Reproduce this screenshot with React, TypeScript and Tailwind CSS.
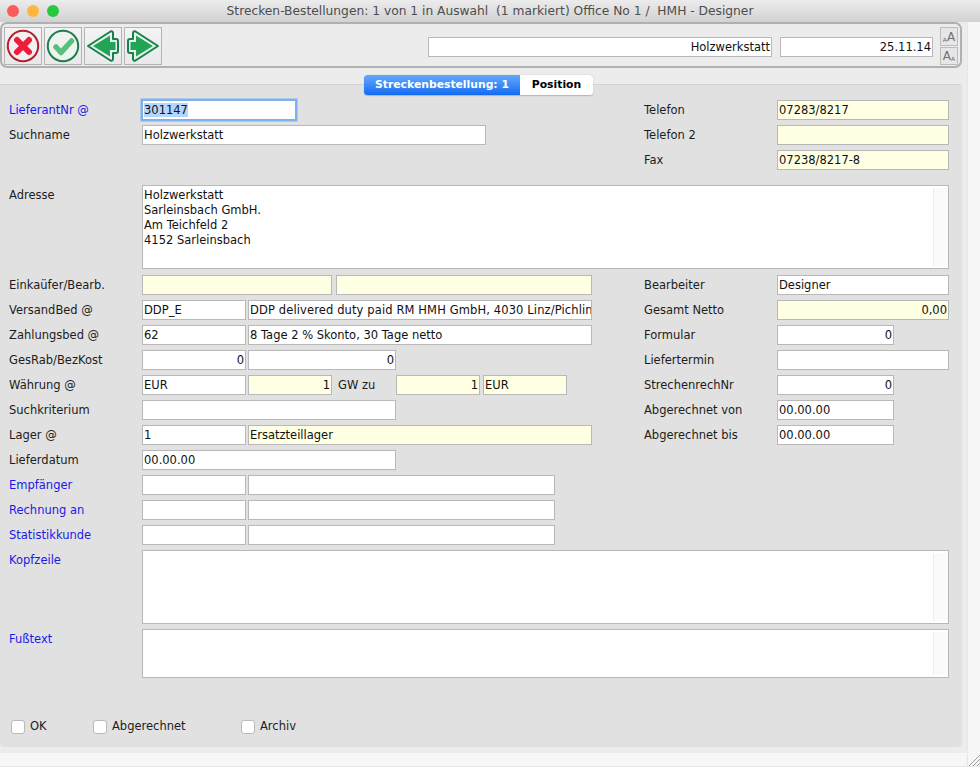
import React from 'react';

const font = { fontFamily: '"DejaVu Sans", sans-serif' };

function Field({ w, text = '', yellow = false, right = false, className = '' }: { w: string; text?: string; yellow?: boolean; right?: boolean; className?: string }) {
  return (
    <div className={`${w} h-5 shrink-0 overflow-hidden whitespace-nowrap border border-[#b8b8b8] px-[1px] pt-[1px] text-[11.5px] leading-[17px] text-[#111] ${yellow ? 'bg-[#ffffe3]' : 'bg-white'} ${right ? 'text-right' : ''} ${className}`}>
      {text}
    </div>
  );
}

function Label({ text, blue = false, w = 'w-[132px] pl-px' }: { text: string; blue?: boolean; w?: string }) {
  return <div className={`${w} shrink-0 pt-[1px] text-[11.5px] leading-[18px] ${blue ? 'text-[#1a1ae6]' : 'text-[#1c1c1c]'}`}>{text}</div>;
}

function Row({ children }: { children: React.ReactNode }) {
  return <div className="flex h-5 items-start">{children}</div>;
}

function Left({ children }: { children?: React.ReactNode }) {
  return <div className="flex w-[636px] shrink-0 items-start gap-[2px]">{children}</div>;
}

function Right({ label, children }: { label: string; children?: React.ReactNode }) {
  return (
    <div className="flex items-start">
      <Label text={label} w="w-[133px]" />
      {children}
    </div>
  );
}

function TextBox({ lines = [], h }: { lines?: string[]; h: string }) {
  return (
    <div className={`${h} flex w-[807px] shrink-0 border border-[#b8b8b8] bg-white`}>
      <div className="flex-1 px-[1px] pt-[2px] text-[11.5px] leading-[15px] text-[#111]">
        {lines.map((l) => (
          <div key={l}>{l}</div>
        ))}
      </div>
      <div className="my-[2px] w-[15px] border-l border-[#ececec] bg-[#fafafa]" />
    </div>
  );
}

function ToolButton({ children }: { children: React.ReactNode }) {
  return <div className="flex h-[38px] w-[38px] items-center justify-center border border-[#b4b4b4] bg-gradient-to-b from-[#f3f3f3] to-[#e9e9e9]">{children}</div>;
}

function Arrow({ flip = false }: { flip?: boolean }) {
  return (
    <svg width="34" height="34" viewBox="0 0 34 34">
      <g transform={flip ? 'translate(34,0) scale(-1,1)' : undefined}>
        <path d="M2 17 L24.5 2.5 Q27 1.5 27 4.5 L27 10 L30 10 Q32 10 32 12 L32 22 Q32 24 30 24 L27 24 L27 29.5 Q27 32.5 24.5 31.5 Z" fill="#e8f3ec" stroke="#17804f" strokeWidth="2" strokeLinejoin="round" />
        <path d="M7 17 L24 6.5 L24 13 L29.5 13 L29.5 21 L24 21 L24 27.5 Z" fill="#22a455" />
      </g>
    </svg>
  );
}

function Check({ label, w }: { label: string; w: string }) {
  return (
    <div className={`${w} flex items-center gap-[5px]`}>
      <div className="h-[14px] w-[14px] rounded-[3px] border border-[#b9b9b9] bg-white" />
      <span className="text-[11.5px] text-[#1c1c1c]">{label}</span>
    </div>
  );
}

export default function App() {
  return (
    <div className="relative h-[767px] w-[980px] overflow-hidden bg-[#ececec]" style={font}>
      {/* title bar */}
      <div className="relative z-10 flex h-[22px] items-center justify-center rounded-t-[5px] bg-gradient-to-b from-[#ececec] to-[#d2d2d2] pt-px">
        <div className="absolute left-[7px] top-[5px] flex gap-2">
          <div className="h-3 w-3 rounded-full bg-[#fc5b57]" />
          <div className="h-3 w-3 rounded-full bg-[#fdb73f]" />
          <div className="h-3 w-3 rounded-full bg-[#26c840]" />
        </div>
        <span className="whitespace-pre text-[12.25px] text-[#4d4d4d]">Strecken-Bestellungen: 1 von 1 in Auswahl  (1 markiert) Office No 1 /  HMH - Designer</span>
      </div>

      <div className="w-[962px] pb-[16px]">
        {/* toolbar */}
        <div className="flex h-[46px] items-center justify-between rounded-[7px] border-2 border-[#b0b0b0] px-[2px] pt-[2px]">
          <div className="flex gap-[2px]">
            <ToolButton>
              <svg width="34" height="34" viewBox="0 0 34 34">
                <circle cx="17" cy="17" r="15.2" fill="#f4eff0" stroke="#b3202f" strokeWidth="2" />
                <path d="M11 11 L23 23 M23 11 L11 23" stroke="#ee1c38" strokeWidth="6" strokeLinecap="round" />
              </svg>
            </ToolButton>
            <ToolButton>
              <svg width="34" height="34" viewBox="0 0 34 34">
                <circle cx="17" cy="17" r="15.2" fill="#eef3ef" stroke="#1f7d4e" strokeWidth="2" />
                <path d="M10 18 L15 23.5 L25.5 12" fill="none" stroke="#5bbf7c" strokeWidth="5.5" strokeLinecap="round" strokeLinejoin="round" />
              </svg>
            </ToolButton>
            <ToolButton>
              <Arrow />
            </ToolButton>
            <ToolButton>
              <Arrow flip />
            </ToolButton>
          </div>
          <div className="flex items-center">
            <Field w="w-[344px]" text="Holzwerkstatt" right className="mt-[2px]" />
            <Field w="w-[153px]" text="25.11.14" right className="ml-[8px] mt-[2px]" />
            <div className="ml-[7px] flex flex-col gap-[1px]">
              <div className="flex h-[19px] w-[18px] items-end justify-center border border-[#bdbdbd] bg-[#e6e6e6] pb-[2px] text-[12px] leading-none text-[#6f6f6f]">
                <span className="text-[6px] leading-[7px]">A</span>A
              </div>
              <div className="flex h-[18px] w-[18px] items-end justify-center border border-[#bdbdbd] bg-[#e6e6e6] pb-[2px] text-[12px] leading-none text-[#6f6f6f]">
                A<span className="text-[6px] leading-[7px]">A</span>
              </div>
            </div>
          </div>
        </div>
      </div>

      {/* main panel */}
      <div className="relative h-[663px] w-[962px] rounded-b-[4px] rounded-tr-[4px] border-t border-[#d2d2d2] bg-[#e1e1e1] pl-2 pt-[15px]">
        <div className="absolute left-[364px] top-[-10px] flex h-[21px] overflow-hidden rounded-[4px] border-b border-[#b9b9b9] text-[10.8px] font-bold leading-[20px] shadow-[0_0_1px_#999]">
          <div className="flex w-[156px] justify-center bg-gradient-to-b from-[#62a9fb] to-[#0f6bf2] text-white">Streckenbestellung: 1</div>
          <div className="flex w-[73px] justify-center bg-white text-black">Position</div>
        </div>

        <div className="flex flex-col gap-[5px]">
          <Row>
            <Left>
              <Label text="LieferantNr @" blue />
              <div className="h-5 w-[154px] border border-[#7fb0ee] bg-white px-[1px] pt-[1px] text-[11.5px] leading-[17px] text-[#111] shadow-[0_0_0_1.5px_#7db1f3]">
                <span className="bg-[#b4d5fe]">301147</span>
              </div>
            </Left>
            <Right label="Telefon"><Field w="w-[172px]" text="07283/8217" yellow /></Right>
          </Row>
          <Row>
            <Left>
              <Label text="Suchname" />
              <Field w="w-[344px]" text="Holzwerkstatt" />
            </Left>
            <Right label="Telefon 2"><Field w="w-[172px]" yellow /></Right>
          </Row>
          <Row>
            <Left />
            <Right label="Fax"><Field w="w-[172px]" text="07238/8217-8" yellow /></Right>
          </Row>
        </div>

        <div className="mt-[15px] flex h-[84px] items-start">
          <Label text="Adresse" w="w-[134px] pl-px" />
          <TextBox h="h-[84px]" lines={['Holzwerkstatt', 'Sarleinsbach GmbH.', 'Am Teichfeld 2', '4152 Sarleinsbach']} />
        </div>

        <div className="mt-[6px] flex flex-col gap-[5px]">
          <Row>
            <Left>
              <Label text="Einkaüfer/Bearb." />
              <Field w="w-[190px]" yellow />
              <Field w="w-[256px]" yellow className="ml-[2px]" />
            </Left>
            <Right label="Bearbeiter"><Field w="w-[172px]" text="Designer" /></Right>
          </Row>
          <Row>
            <Left>
              <Label text="VersandBed @" />
              <Field w="w-[104px]" text="DDP_E" />
              <Field w="w-[344px]" text="DDP delivered duty paid RM HMH GmbH, 4030 Linz/Pichlin" className="tracking-[0.12px]" />
            </Left>
            <Right label="Gesamt Netto"><Field w="w-[172px]" text="0,00" yellow right /></Right>
          </Row>
          <Row>
            <Left>
              <Label text="Zahlungsbed @" />
              <Field w="w-[104px]" text="62" />
              <Field w="w-[344px]" text="8 Tage 2 % Skonto, 30 Tage netto" />
            </Left>
            <Right label="Formular"><Field w="w-[117px]" text="0" right /></Right>
          </Row>
          <Row>
            <Left>
              <Label text="GesRab/BezKost" />
              <Field w="w-[104px]" text="0" right />
              <Field w="w-[148px]" text="0" right />
            </Left>
            <Right label="Liefertermin"><Field w="w-[172px]" /></Right>
          </Row>
          <Row>
            <Left>
              <Label text="Währung @" />
              <Field w="w-[104px]" text="EUR" />
              <Field w="w-[84px]" text="1" yellow right />
              <Label text="GW zu" w="w-[60px] pl-[4px]" />
              <Field w="w-[84px]" text="1" yellow right />
              <Field w="w-[84px]" text="EUR" yellow className="ml-px" />
            </Left>
            <Right label="StrechenrechNr"><Field w="w-[117px]" text="0" right /></Right>
          </Row>
          <Row>
            <Left>
              <Label text="Suchkriterium" />
              <Field w="w-[254px]" />
            </Left>
            <Right label="Abgerechnet von"><Field w="w-[117px]" text="00.00.00" /></Right>
          </Row>
          <Row>
            <Left>
              <Label text="Lager @" />
              <Field w="w-[104px]" text="1" />
              <Field w="w-[344px]" text="Ersatzteillager" yellow />
            </Left>
            <Right label="Abgerechnet bis"><Field w="w-[117px]" text="00.00.00" /></Right>
          </Row>
          <Row>
            <Left>
              <Label text="Lieferdatum" />
              <Field w="w-[254px]" text="00.00.00" />
            </Left>
          </Row>
          <Row>
            <Left>
              <Label text="Empfänger" blue />
              <Field w="w-[104px]" />
              <Field w="w-[307px]" />
            </Left>
          </Row>
          <Row>
            <Left>
              <Label text="Rechnung an" blue />
              <Field w="w-[104px]" />
              <Field w="w-[307px]" />
            </Left>
          </Row>
          <Row>
            <Left>
              <Label text="Statistikkunde" blue />
              <Field w="w-[104px]" />
              <Field w="w-[307px]" />
            </Left>
          </Row>
        </div>

        <div className="mt-[5px] flex h-[74px] items-start">
          <Label text="Kopfzeile" blue w="w-[134px] pl-px" />
          <TextBox h="h-[74px]" />
        </div>
        <div className="mt-[5px] flex h-[49px] items-start">
          <Label text="Fußtext" blue w="w-[134px] pl-px" />
          <TextBox h="h-[49px]" />
        </div>

        <div className="mt-[40px] flex pl-[3px]">
          <Check label="OK" w="w-[82px]" />
          <Check label="Abgerechnet" w="w-[148px]" />
          <Check label="Archiv" w="w-[80px]" />
        </div>
      </div>

      {/* window edge strips */}
      <div className="absolute bottom-0 right-0 top-[22px] w-[13px] border-l border-[#e6e6e6] bg-[#f7f7f7]" />
      <div className="absolute bottom-0 left-0 right-0 h-[14px] border-b border-[#e6e6e6] bg-[#f7f7f7]" />
      <div className="absolute bottom-0 right-0 h-[13px] w-[13px] border-l border-[#e6e6e6]">
        <svg width="12" height="12" viewBox="0 0 12 12">
          <path d="M1 12 L12 1 M5 12 L12 5 M9 12 L12 9" stroke="#9a9a9a" strokeWidth="1" />
        </svg>
      </div>
    </div>
  );
}
